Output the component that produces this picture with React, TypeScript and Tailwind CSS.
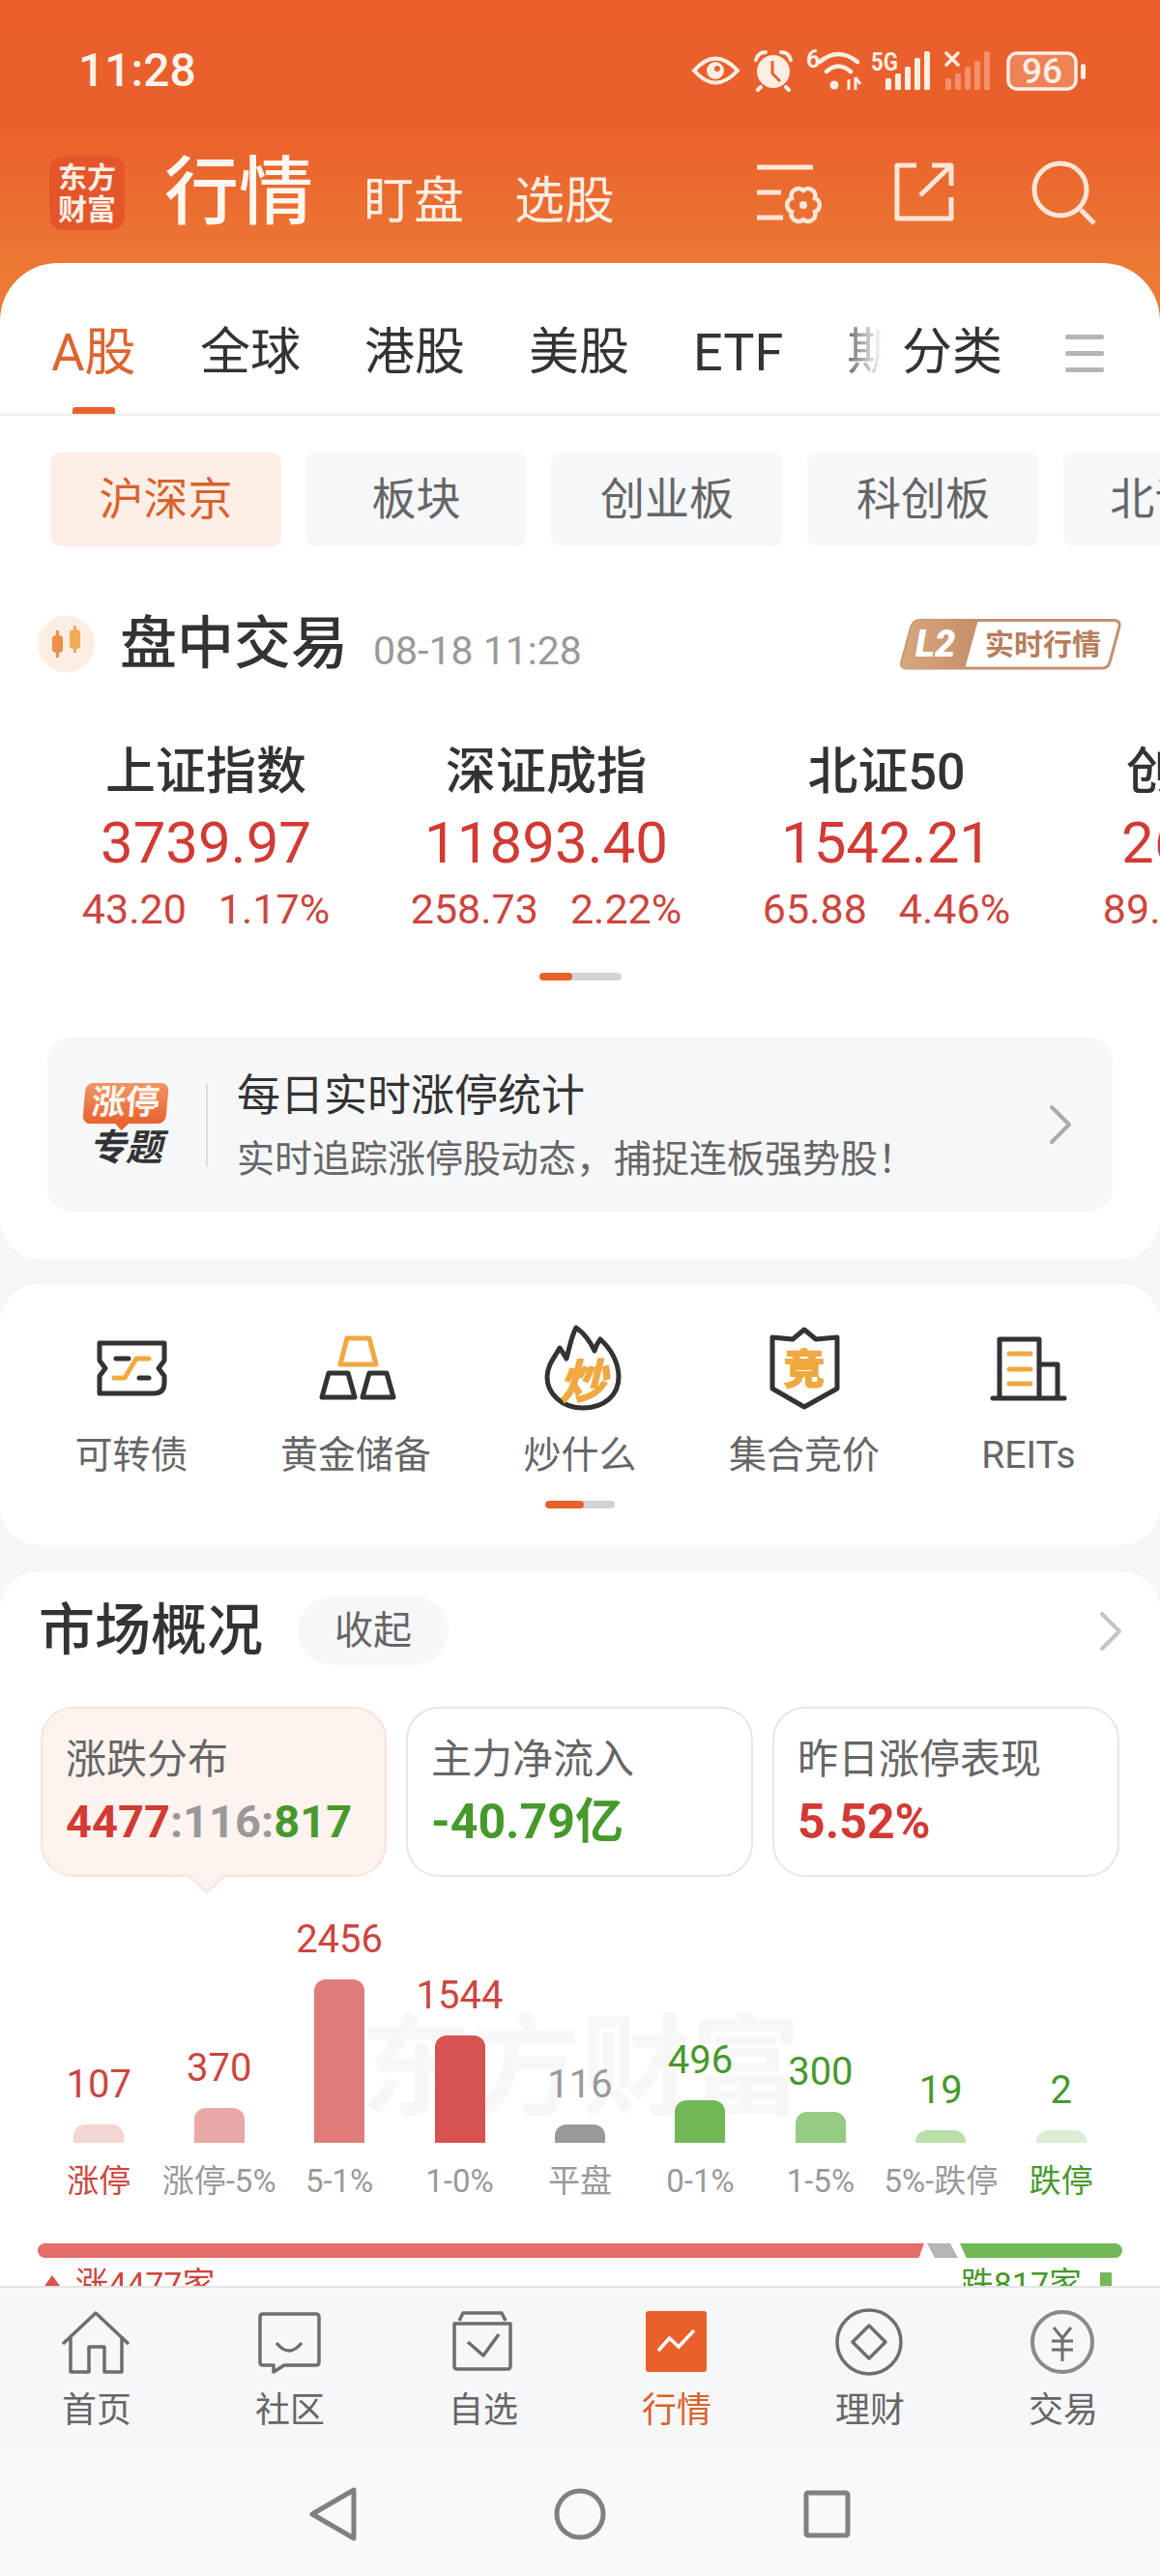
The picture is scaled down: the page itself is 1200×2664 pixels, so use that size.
const indices = [
  { name: '上证指数', value: '3739.97', delta: '43.20', pct: '1.17%' },
  { name: '深证成指', value: '11893.40', delta: '258.73', pct: '2.22%' },
  { name: '北证50', value: '1542.21', delta: '65.88', pct: '4.46%' },
  { name: '创业板指', value: '2604.22', delta: '89.35', pct: '3.55%' },
]

const bars = [
  { count: '107', label: '涨停', bar: 'h-[19px] bg-[#f3d5d4]', num: 'text-[#cc4640]', text: 'text-[#cc4640]' },
  { count: '370', label: '涨停-5%', bar: 'h-[36px] bg-[#e8a8a7]', num: 'text-[#cc4640]', text: 'text-[#999]' },
  { count: '2456', label: '5-1%', bar: 'h-[169px] bg-[#df7b78]', num: 'text-[#cc4640]', text: 'text-[#999]' },
  { count: '1544', label: '1-0%', bar: 'h-[111px] bg-[#d75350]', num: 'text-[#cc4640]', text: 'text-[#999]' },
  { count: '116', label: '平盘', bar: 'h-[19px] bg-[#999]', num: 'text-[#999]', text: 'text-[#999]' },
  { count: '496', label: '0-1%', bar: 'h-[44px] bg-[#72b857]', num: 'text-[#46992c]', text: 'text-[#999]' },
  { count: '300', label: '1-5%', bar: 'h-[32px] bg-[#95cb82]', num: 'text-[#46992c]', text: 'text-[#999]' },
  { count: '19', label: '5%-跌停', bar: 'h-[13px] bg-[#badfaa]', num: 'text-[#46992c]', text: 'text-[#999]' },
  { count: '2', label: '跌停', bar: 'h-[13px] bg-[#dcecd5]', num: 'text-[#46992c]', text: 'text-[#46992c]' },
]

function StatusIcons() {
  return (
    <svg width="420" height="46" viewBox="710 50 420 46" className="shrink-0">
      {/* eye */}
      <path d="M718 73 Q740 48 763 73 Q740 98 718 73Z" fill="none" stroke="#fdeee4" strokeWidth="4" />
      <circle cx="740" cy="73" r="9" fill="#fdeee4" />
      <circle cx="742" cy="71" r="3" fill="#ea602b" />
      {/* alarm clock */}
      <circle cx="800" cy="74" r="17" fill="#fdeee4" />
      <path d="M782 62 Q784 54 792 54 M818 62 Q816 54 808 54 M787 90 L784 93 M813 90 L816 93" stroke="#fdeee4" strokeWidth="4" strokeLinecap="round" fill="none" />
      <path d="M799 63 V76 L807 84" stroke="#ea602b" strokeWidth="3" fill="none" />
      {/* wifi */}
      <text x="834" y="70" fontSize="25" fontWeight="700" fill="#fdeee4" fontFamily="Roboto">6</text>
      <path d="M848 64 Q867 48 887 64 M855 74 Q867 63 880 74" fill="none" stroke="#fdeee4" strokeWidth="4.5" strokeLinecap="round" />
      <circle cx="863" cy="88" r="4.5" fill="#fdeee4" />
      <path d="M878 82 V93 M885 80 V93 M885 80 L890 87" stroke="#fdeee4" strokeWidth="3" fill="none" />
      {/* 5G signal */}
      <text x="901" y="73" fontSize="25" fontWeight="700" fill="#fdeee4" fontFamily="Roboto" textLength="28" lengthAdjust="spacingAndGlyphs">5G</text>
      <g fill="#fdeee4">
        <rect x="916" y="81" width="6" height="12" rx="1.5" />
        <rect x="926" y="76" width="6" height="17" rx="1.5" />
        <rect x="936" y="69" width="6" height="24" rx="1.5" />
        <rect x="946" y="60" width="6" height="33" rx="1.5" />
        <rect x="956" y="53" width="6" height="40" rx="1.5" />
      </g>
      {/* second sim */}
      <path d="M979 55 L991 67 M991 55 L979 67" stroke="#fdeee4" strokeWidth="3.5" strokeLinecap="round" />
      <g fill="#f4906a">
        <rect x="978" y="81" width="6" height="12" rx="1.5" />
        <rect x="988" y="76" width="6" height="17" rx="1.5" />
        <rect x="998" y="69" width="6" height="24" rx="1.5" />
        <rect x="1008" y="63" width="6" height="30" rx="1.5" />
        <rect x="1018" y="53" width="6" height="40" rx="1.5" />
      </g>
      {/* battery */}
      <rect x="1043" y="55" width="70" height="37" rx="9" fill="#f08257" stroke="#fdeee4" strokeWidth="3.5" />
      <rect x="1118" y="66" width="5" height="16" rx="2.5" fill="#fdeee4" />
      <text x="1078" y="86" fontSize="37" fontWeight="500" fill="#fdeee4" textAnchor="middle" fontFamily="Roboto">96</text>
    </svg>
  )
}

function HeaderIcons() {
  const line = { stroke: '#fde6d8', strokeWidth: 5, fill: 'none' }
  return (
    <div className="ml-auto mr-[64px] flex gap-[70px]">
      <svg width="72" height="72" viewBox="0 0 72 72">
        <path d="M3 9 H61 M3 35 H28 M3 61 H30" {...line} />
        <path d="M51 33 A7.5 7.5 0 0 1 63 41 A7.5 7.5 0 0 1 63 55 A7.5 7.5 0 0 1 51 63 A7.5 7.5 0 0 1 39 55 A7.5 7.5 0 0 1 39 41 A7.5 7.5 0 0 1 51 33Z" {...line} strokeWidth={4.5} />
        <circle cx="51" cy="48" r="4" fill="#fde6d8" />
      </svg>
      <svg width="72" height="72" viewBox="0 0 72 72">
        <path d="M26 7 H6 V62 H62 V40 M42 7 H62 V28 M30 38 L60 9" {...line} strokeLinejoin="round" />
      </svg>
      <svg width="72" height="72" viewBox="0 0 72 72">
        <circle cx="33" cy="32" r="27" {...line} />
        <path d="M54 53 L68 67" {...line} />
      </svg>
    </div>
  )
}

function Chevron({ color }: { color: string }) {
  return (
    <svg width="26" height="42" viewBox="0 0 26 42" fill="none" stroke={color} strokeWidth="4" strokeLinecap="round" strokeLinejoin="round" className="shrink-0">
      <path d="M4 3 L22 21 L4 39" />
    </svg>
  )
}

function TicketIcon() {
  return (
    <svg width="90" height="90" viewBox="0 0 90 90" fill="none" strokeWidth="5" strokeLinecap="round" strokeLinejoin="round">
      <path d="M12 19 H79 V37 L73 45 L79 53 V60 Q79 71 68 71 H12 V53 L18 45 L12 37Z" stroke="#333" />
      <path d="M29 35 H42 M53 55 H63" stroke="#333" />
      <path d="M27 55 H38 L50 35 H63" stroke="#f0a840" />
    </svg>
  )
}

function GoldIcon() {
  return (
    <svg width="90" height="90" viewBox="0 0 90 90" fill="none" strokeWidth="5" strokeLinejoin="round">
      <path d="M36 14 H59 L66 41 H29Z" stroke="#f0a840" />
      <path d="M17 50 H37 L44 75 H10Z M59 50 H77 L84 75 H52Z" stroke="#333" />
    </svg>
  )
}

function FlameIcon() {
  return (
    <svg width="90" height="90" viewBox="0 0 90 90" fill="none">
      <path d="M48 86 C26 86 11 71 11 54 C11 42 19 33 24 24 C27 28 29 32 31 35 C34 24 36 12 41 3 C48 8 55 16 60 27 C61 23 63 19 66 15 C76 24 85 38 85 54 C85 73 70 86 48 86Z" stroke="#333" strokeWidth="5" strokeLinejoin="round" />
      <text x="48" y="76" fontSize="48" fontWeight="700" fontStyle="italic" fill="#f0a840" stroke="#f0a840" strokeWidth="1.5" textAnchor="middle">炒</text>
    </svg>
  )
}

function ShieldIcon() {
  return (
    <svg width="90" height="90" viewBox="0 0 90 90" fill="none">
      <path d="M45 5 L57 15 L79 13 V66 L45 85 L12 66 V13 L33 15Z" stroke="#333" strokeWidth="5" strokeLinejoin="round" />
      <text x="45" y="61" fontSize="42" fontWeight="700" fill="#f0a840" stroke="#f0a840" strokeWidth="2" textAnchor="middle">竞</text>
    </svg>
  )
}

function BuildingIcon() {
  return (
    <svg width="90" height="90" viewBox="0 0 90 90" fill="none" strokeWidth="5" strokeLinecap="round" strokeLinejoin="round">
      <path d="M15 76 V15 H56 V76 M56 41 H75 V76 M8 76 H82" stroke="#333" />
      <path d="M25 30 H47 M25 46 H47 M25 61 H47" stroke="#f0a840" />
    </svg>
  )
}

const shortcuts = [
  { label: '可转债', icon: <TicketIcon /> },
  { label: '黄金储备', icon: <GoldIcon /> },
  { label: '炒什么', icon: <FlameIcon /> },
  { label: '集合竞价', icon: <ShieldIcon /> },
  { label: 'REITs', icon: <BuildingIcon /> },
]

function NavIcon({ name }: { name: string }) {
  const s = { fill: 'none', stroke: '#6e6e6e', strokeWidth: 3.5, strokeLinejoin: 'round' as const }
  return (
    <svg width="80" height="80" viewBox="0 0 80 80">
      {name === 'home' && <path d="M5 42 L39 10 L73 42 M13 34 V71 H32 V45 H48 V71 H66 V34" {...s} />}
      {name === 'chat' && (
        <>
          <path d="M12 11 H67 Q70 11 70 14 V61 Q70 64 67 64 H34 L23 71 V64 H12 Q9 64 9 61 V14 Q9 11 12 11Z" {...s} />
          <path d="M26 41 Q39 57 52 41" {...s} />
        </>
      )}
      {name === 'watch' && <path d="M15 18 L19 10 H59 L63 18 M10 21 H68 V65 Q68 68 65 68 H13 Q10 68 10 65Z M24 40 L40 54 L56 32" {...s} />}
      {name === 'market' && (
        <>
          <rect x="8" y="8" width="63" height="63" rx="3" fill="#ea602b" />
          <path d="M21 49 L32.5 36 L42 45 L58 28" fill="none" stroke="#fff" strokeWidth="3.5" />
        </>
      )}
      {name === 'wealth' && (
        <>
          <circle cx="39" cy="40" r="33" {...s} />
          <path d="M39 23 L56 40 L39 57 L22 40Z" {...s} />
        </>
      )}
      {name === 'trade' && (
        <>
          <circle cx="39" cy="40" r="31" {...s} stroke="#8a8a8a" strokeWidth={4} />
          <path d="M30 25 L39 36 L48 25 M28 39 H50 M28 48 H50 M39 36 V60" {...s} strokeWidth={3} />
        </>
      )}
    </svg>
  )
}

const navItems = [
  { label: '首页', icon: 'home' },
  { label: '社区', icon: 'chat' },
  { label: '自选', icon: 'watch' },
  { label: '行情', icon: 'market' },
  { label: '理财', icon: 'wealth' },
  { label: '交易', icon: 'trade' },
]

export default function App() {
  return (
    <div className="flex h-[2664px] w-[1200px] flex-col overflow-hidden bg-[#f5f6f8] font-[Roboto,'Noto_Sans_CJK_SC',sans-serif] text-[#333]">
      <div className="relative min-h-0 flex-1 overflow-hidden">
        {/* Orange header */}
        <div className="h-[332px] bg-[linear-gradient(#ea5f2b_0,#ea602b_130px,#ec7935_280px)]">
          <div className="flex items-center justify-between pl-[81px] pr-[70px] pt-[50px]">
            <span className="text-[48px] font-medium leading-[46px] text-[#fdf3ec]">11:28</span>
            <StatusIcons />
          </div>
          <div className="mt-[64px] flex h-[80px] items-center pl-[51px]">
            <div className="flex h-[76px] w-[78px] shrink-0 flex-col items-center justify-center rounded-[14px] bg-[#e5552a] text-[30px] font-bold leading-[33px] text-[#fdeee4]">
              <span>东方</span>
              <span>财富</span>
            </div>
            <span className="ml-[41px] text-[77px] font-medium leading-[80px] text-[#fff6f0]">行情</span>
            <span className="ml-[52px] mt-[18px] text-[52px] leading-[62px] text-[#fdeee4]">盯盘</span>
            <span className="ml-[52px] mt-[18px] text-[52px] leading-[62px] text-[#fdeee4]">选股</span>
            <HeaderIcons />
          </div>
        </div>

        {/* Quotes panel */}
        <div className="-mt-[60px] rounded-[60px_60px_40px_40px] bg-white pb-[49px]">
          <div className="relative border-b-2 border-[#eee] pl-[53px] pt-[63px]">
            <div className="flex gap-[66px] overflow-hidden whitespace-nowrap text-[52px] leading-[60px]">
              <div className="w-[88px] shrink-0">
                <div className="text-[53px] text-[#dd6530]">A股</div>
                <div className="mx-auto mt-[26px] h-[7px] w-[44px] rounded-t-[3px] bg-[#ea602b]" />
              </div>
              <span className="shrink-0">全球</span>
              <span className="shrink-0">港股</span>
              <span className="shrink-0">美股</span>
              <span className="shrink-0 text-[54px]">ETF</span>
              <span className="shrink-0 text-[#777]">期货</span>
            </div>
            <div className="absolute right-0 top-[63px] flex h-[60px] items-center bg-[linear-gradient(90deg,transparent_0,#fff_34px)] pl-[54px] pr-[58px]">
              <span className="text-[52px] leading-[60px]">分类</span>
              <div className="ml-[65px] flex flex-col gap-[12px]">
                <div className="h-[5px] w-[40px] rounded-[2px] bg-[#b5b5b5]" />
                <div className="h-[5px] w-[40px] rounded-[2px] bg-[#b5b5b5]" />
                <div className="h-[5px] w-[40px] rounded-[2px] bg-[#b5b5b5]" />
              </div>
            </div>
          </div>

          <div className="mt-[38px] flex gap-[25px] overflow-hidden whitespace-nowrap pl-[52px] text-[46px] text-[#666]">
            <div className="flex h-[97px] w-[239px] shrink-0 items-center justify-center rounded-[10px] bg-[#fdeee6] text-[#d8632c]">沪深京</div>
            <div className="flex h-[97px] w-[229px] shrink-0 items-center justify-center rounded-[10px] bg-[#f6f7f9]">板块</div>
            <div className="flex h-[97px] w-[240px] shrink-0 items-center justify-center rounded-[10px] bg-[#f6f7f9]">创业板</div>
            <div className="flex h-[97px] w-[240px] shrink-0 items-center justify-center rounded-[10px] bg-[#f6f7f9]">科创板</div>
            <div className="flex h-[97px] w-[240px] shrink-0 items-center justify-center rounded-[10px] bg-[#f6f7f9]">北证50</div>
          </div>

          <div className="mt-[71px] flex h-[60px] items-center pl-[39px] pr-[39px]">
            <svg width="59" height="60" viewBox="0 0 59 60" className="shrink-0">
              <circle cx="29.5" cy="30" r="29.5" fill="#fdeee4" />
              <path d="M20.5 16 V44" stroke="#ee8f4b" strokeWidth="3" />
              <rect x="15" y="21" width="11" height="18" rx="4" fill="#ee8f4b" />
              <path d="M38.5 11 V39" stroke="#f3ab58" strokeWidth="3" />
              <rect x="33" y="15" width="11" height="20" rx="4" fill="#f3ab58" />
            </svg>
            <span className="ml-[26px] text-[59px] font-medium leading-[60px]">盘中交易</span>
            <span className="ml-[26px] mt-[14px] text-[41px] leading-[50px] text-[#999]">08-18 11:28</span>
            <svg width="231" height="53" viewBox="0 0 231 53" className="ml-auto shrink-0">
              <defs>
                <linearGradient id="l2" x1="0" x2="1" y1="0" y2="0">
                  <stop offset="0" stopColor="#d9a77e" />
                  <stop offset="1" stopColor="#c38f6a" />
                </linearGradient>
              </defs>
              <path d="M22 1.5 H222 Q229 1.5 228 8 L218 45 Q216 51 210 51 H8 Q1 51 3 44 L13 8 Q15 1.5 22 1.5Z" fill="#fff" stroke="#c5906d" strokeWidth="3" />
              <path d="M22 1 H82 L68 52 H8 Q1 52 3 44 L13 8 Q15 1 22 1Z" fill="url(#l2)" />
              <text x="17" y="39" fontSize="38" fontWeight="900" fontStyle="italic" fill="#fff" fontFamily="Roboto">L2</text>
              <text x="89" y="37" fontSize="30" fontWeight="700" fill="#b77e5c">实时行情</text>
            </svg>
          </div>

          <div className="mt-[73px] flex overflow-hidden pl-[37px]">
            {indices.map(item => (
              <div key={item.name} className="w-[352px] shrink-0 text-center">
                <div className="text-[52px] font-medium leading-[60px]">{item.name}</div>
                <div className="mt-[8px] text-[60px] font-[450] leading-[70px] text-[#d23a34]">{item.value}</div>
                <div className="mt-[8px] flex justify-center gap-[33px] text-[43px] leading-[50px] text-[#cc4640]">
                  <span>{item.delta}</span>
                  <span>{item.pct}</span>
                </div>
              </div>
            ))}
          </div>

          <div className="mx-auto mt-[41px] flex h-[8px] w-[85px] overflow-hidden rounded-full bg-[#d2d3d8]">
            <div className="h-full w-[34px] rounded-full bg-[#ea602b]" />
          </div>

          {/* 涨停 banner */}
          <div className="mx-[49px] mt-[59px] flex h-[180px] items-center rounded-[24px] bg-[#f6f7f9] pl-[36px]">
            <div className="flex w-[90px] shrink-0 flex-col items-center">
              <div className="relative flex h-[42px] w-[86px] items-center justify-center rounded-[8px] bg-[linear-gradient(#ef9664,#e8622e)] text-[35px] font-bold leading-[42px] text-[#fff6f0] [transform:skewX(-5deg)]">
                涨停
                <div className="absolute -bottom-[5px] left-[36px] h-[10px] w-[10px] rotate-45 bg-[#e8622e]" />
              </div>
              <div className="mt-[5px] text-[38px] font-bold italic leading-[40px]">专题</div>
            </div>
            <div className="ml-[38px] h-[85px] w-[2px] bg-[#dcdde0]" />
            <div className="ml-[30px] mt-[4px] flex-1">
              <div className="text-[45px] leading-[56px]">每日实时涨停统计</div>
              <div className="mt-[12px] text-[39px] leading-[50px] text-[#666]">实时追踪涨停股动态，捕捉连板强势股！</div>
            </div>
            <div className="mr-[41px]">
              <Chevron color="#aaa" />
            </div>
          </div>
        </div>

        {/* Shortcut grid */}
        <div className="mt-[26px] rounded-[40px] bg-white pb-[38px] pt-[42px]">
          <div className="grid grid-cols-5 px-[20px]">
            {shortcuts.map(item => (
              <div key={item.label} className="flex flex-col items-center">
                {item.icon}
                <span className="mt-[20px] whitespace-nowrap text-[39px] leading-[50px] text-[#666]">{item.label}</span>
              </div>
            ))}
          </div>
          <div className="mx-auto mt-[22px] flex h-[8px] w-[72px] overflow-hidden rounded-full bg-[#d2d3d8]">
            <div className="h-full w-[40px] rounded-full bg-[#ea602b]" />
          </div>
        </div>

        {/* Market overview */}
        <div className="mt-[27px] rounded-t-[40px] bg-white pt-[26px]">
          <div className="flex h-[71px] items-center pl-[40px] pr-[38px]">
            <span className="text-[58px] font-medium leading-[71px]">市场概况</span>
            <span className="ml-[36px] flex h-[71px] w-[156px] items-center justify-center rounded-full bg-[#f6f7f9] text-[40px] text-[#666]">收起</span>
            <div className="ml-auto">
              <Chevron color="#c4c4c4" />
            </div>
          </div>

          <div className="mt-[43px] flex gap-[20px] px-[42px]">
            <div className="relative h-[176px] w-[358px] rounded-[34px] border-2 border-[#fae3d9] bg-[#fdf3ef] pl-[24px] pt-[28px]">
              <div className="text-[42px] leading-[50px] text-[#666]">涨跌分布</div>
              <div className="mt-[11px] whitespace-nowrap text-[47px] font-bold leading-[56px]">
                <span className="text-[#d23a34]">4477</span>
                <span className="text-[#999]">:116:</span>
                <span className="text-[#46992c]">817</span>
              </div>
              <svg width="40" height="20" viewBox="0 0 40 20" className="absolute left-[150px] top-[172px]">
                <path d="M1 1 L20 18 L39 1" fill="#fdf3ef" stroke="#fae3d9" strokeWidth="2" />
                <path d="M3 0 H37 V1 H3Z" fill="#fdf3ef" />
              </svg>
            </div>
            <div className="h-[176px] w-[359px] rounded-[34px] border-2 border-[#e6e6e8] pl-[24px] pt-[28px]">
              <div className="text-[42px] leading-[50px] text-[#666]">主力净流入</div>
              <div className="mt-[11px] text-[50px] font-bold leading-[56px] text-[#46992c]">-40.79亿</div>
            </div>
            <div className="h-[176px] w-[359px] rounded-[34px] border-2 border-[#e6e6e8] pl-[24px] pt-[28px]">
              <div className="text-[42px] leading-[50px] text-[#666]">昨日涨停表现</div>
              <div className="mt-[11px] text-[50px] font-bold leading-[56px] text-[#d23a34]">5.52%</div>
            </div>
          </div>

          <div className="relative">
            <div className="absolute left-[373px] top-[138px] whitespace-nowrap text-[114px] font-bold leading-[120px] text-[#f7f7f7]">东方财富</div>
            <div className="relative grid h-[275px] grid-cols-9 items-end px-[40px]">
              {bars.map(item => (
                <div key={item.label} className="flex flex-col items-center">
                  <span className={`mb-[18px] text-[40px] leading-[46px] ${item.num}`}>{item.count}</span>
                  <div className={`w-[52px] rounded-t-[12px] ${item.bar}`} />
                </div>
              ))}
            </div>
            <div className="relative mt-[20px] grid grid-cols-9 px-[40px] text-center text-[33px] leading-[40px]">
              {bars.map(item => (
                <span key={item.label} className={`whitespace-nowrap ${item.text}`}>{item.label}</span>
              ))}
            </div>
          </div>

          <div className="mx-[39px] mt-[44px] flex h-[15px] overflow-hidden rounded-full">
            <div className="w-[917px] bg-[#e56c69] [clip-path:polygon(0_0,100%_0,99.4%_100%,0_100%)]" />
            <div className="ml-[3px] w-[32px] bg-[#b5b5b5] [clip-path:polygon(0_0,75%_0,100%_100%,25%_100%)]" />
            <div className="ml-[2px] flex-1 bg-[#72b857] [clip-path:polygon(0_0,100%_0,100%_100%,4%_100%)]" />
          </div>
          <div className="mt-[5px] flex items-center justify-between pl-[41px] pr-[50px] text-[34px] leading-[44px]">
            <div className="flex items-center text-[#cc4640]">
              <svg width="26" height="20" viewBox="0 0 26 20" className="mr-[11px]">
                <path d="M13 1 L26 19 H0Z" fill="#d75350" />
              </svg>
              涨4477家
            </div>
            <div className="flex items-center text-[#46992c]">
              跌817家
              <div className="ml-[19px] h-[24px] w-[12px] bg-[#72b857]" />
            </div>
          </div>
        </div>
      </div>

      {/* Bottom tabs */}
      <div className="grid h-[172px] shrink-0 grid-cols-6 border-t-2 border-[#e3e3e6] bg-[#f6f7f9]">
        {navItems.map(item => (
          <div key={item.label} className="flex flex-col items-center pt-[16px]">
            <NavIcon name={item.icon} />
            <span className={`mt-[9px] text-[36px] leading-[44px] ${item.icon === 'market' ? 'text-[#d9622b]' : 'text-[#666]'}`}>{item.label}</span>
          </div>
        ))}
      </div>

      {/* System navigation */}
      <div className="flex h-[128px] shrink-0 items-center justify-center gap-[195px] bg-[#f9f9fb]">
        <svg width="60" height="60" viewBox="0 0 60 60" fill="none" stroke="#808080" strokeWidth="5" strokeLinejoin="round">
          <path d="M51 5 V55 L8 30Z" />
        </svg>
        <svg width="60" height="60" viewBox="0 0 60 60" fill="none" stroke="#808080" strokeWidth="5">
          <circle cx="30" cy="30" r="24" />
        </svg>
        <svg width="60" height="60" viewBox="0 0 60 60" fill="none" stroke="#808080" strokeWidth="5" strokeLinejoin="round">
          <rect x="9" y="8" width="43" height="44" rx="2" />
        </svg>
      </div>
    </div>
  )
}
